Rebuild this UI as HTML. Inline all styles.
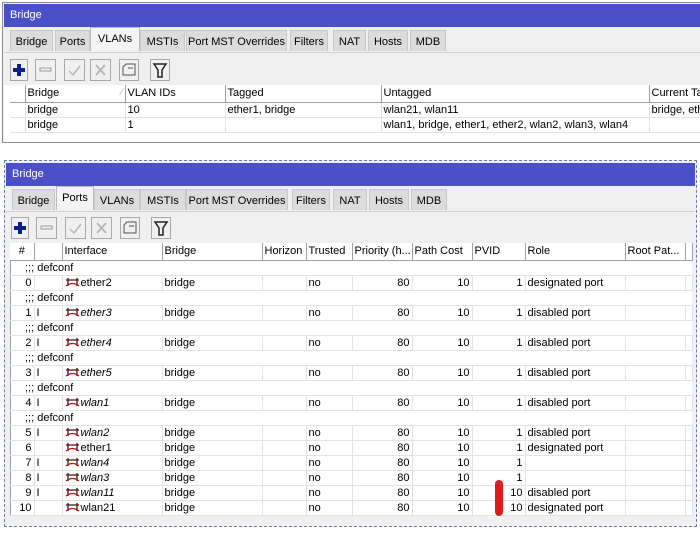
<!DOCTYPE html>
<html><head><meta charset="utf-8"><style>
*{margin:0;padding:0;box-sizing:border-box}
body{width:700px;height:538px;background:#fff;position:relative;overflow:hidden;font-family:"Liberation Sans",sans-serif;font-size:11px;color:#000}
.abs{position:absolute}
.title{background:#4b4fc9;color:#fff;font-size:11px;padding:5px 0 0 6px}
.tab{position:absolute;height:21px;background:#dcdcdc;border:1px solid #c8c8c8;border-bottom:none;padding:5px 0 0 0;text-align:center}
.tab.act{background:#f4f4f4;height:24px;top:-3px;padding-top:5px;border-color:#bdbdbd}
.btn{position:absolute;top:0;height:22px;border:1px solid #a9a9a9;background:#f0f0f0}
table{border-collapse:collapse;table-layout:fixed;position:absolute}
td{height:15px;padding:0 2px;white-space:nowrap;overflow:hidden;border-right:1px solid #e3e3e3;border-bottom:1px solid #e3e3e3;line-height:14px}
th{font-weight:normal;text-align:left;height:17px;padding:0 2px;border-right:1px solid #a0a0a0;border-bottom:1px solid #a0a0a0;background:#fff;white-space:nowrap;overflow:hidden}
.r{text-align:right}
.c{text-align:center}
i{font-style:italic}
.dc td{border-right:none;padding-left:15px}
.ic{display:inline-block;width:15px;height:10px;vertical-align:-1px;margin-right:1px}
</style></head><body>

<!-- top window -->
<div class="abs" style="left:2px;top:2px;width:698px;height:141px;border:1px solid #8a8a8a;border-right:none;background:#f0f0f0"></div>
<div class="abs title" style="left:4px;top:4px;width:696px;height:23px">Bridge</div>
<div class="abs" style="left:4px;top:30px;width:696px;height:23px;border-bottom:1px solid #d0d0d0">
 <div class="tab" style="left:6px;width:43px">Bridge</div>
 <div class="tab" style="left:51px;width:35px">Ports</div>
 <div class="tab act" style="left:86px;width:50px">VLANs</div>
 <div class="tab" style="left:136px;width:45px">MSTIs</div>
 <div class="tab" style="left:182px;width:101px">Port MST Overrides</div>
 <div class="tab" style="left:286px;width:38px">Filters</div>
 <div class="tab" style="left:329px;width:33px">NAT</div>
 <div class="tab" style="left:364px;width:40px">Hosts</div>
 <div class="tab" style="left:406px;width:36px">MDB</div>
</div>
<div class="abs" style="left:0;top:59px">
 <div class="btn" style="left:10px;width:18px"><svg width="16" height="20"><path d="M8 4v12M2 10h12" stroke="#0b1f8f" stroke-width="4"/></svg></div>
 <div class="btn" style="left:35px;width:21px"><svg width="19" height="20"><rect x="4" y="8" width="11" height="3" fill="none" stroke="#9a9a9a"/></svg></div>
 <div class="btn" style="left:64px;width:21px"><svg width="19" height="20"><path d="M4 11l4 4 7-9" fill="none" stroke="#b8b8b8" stroke-width="1.5"/></svg></div>
 <div class="btn" style="left:90px;width:21px"><svg width="19" height="20"><path d="M5 5l9 10M14 5l-9 10" stroke="#b8b8b8" stroke-width="2"/></svg></div>
 <div class="btn" style="left:119px;width:20px"><svg width="18" height="20"><path d="M3 15V7l3-3h9v11z" fill="none" stroke="#555"/><path d="M8 8h5" stroke="#555"/></svg></div>
 <div class="btn" style="left:150px;width:20px"><svg width="18" height="20"><path d="M3 4h12l-4 6v7h-4v-7z" fill="none" stroke="#222" stroke-width="1.5"/></svg></div>
</div>
<div class="abs" style="left:4px;top:85px;width:696px;height:57px;background:#fff"></div>
<table style="left:10px;top:85px;width:700px">
<colgroup><col style="width:15px"><col style="width:100px"><col style="width:100px"><col style="width:156px"><col style="width:268px"><col style="width:61px"></colgroup>
<tr><th></th><th>Bridge<span style="float:right;color:#aaa;font-size:9px">⁄</span></th><th>VLAN IDs</th><th>Tagged</th><th>Untagged</th><th>Current Tagged</th></tr>
<tr style="border-top:1px dotted #555"><td></td><td>bridge</td><td>10</td><td>ether1, bridge</td><td>wlan21, wlan11</td><td>bridge, ether1</td></tr>
<tr><td></td><td>bridge</td><td>1</td><td></td><td>wlan1, bridge, ether1, ether2, wlan2, wlan3, wlan4</td><td></td></tr>
</table>

<!-- bottom window -->
<div class="abs" style="left:4px;top:160px;width:693px;height:367px;border:1px dashed #6b7d9a;background:#f0f0f0"></div>
<div class="abs title" style="left:6px;top:163px;width:689px;height:23px">Bridge</div>
<div class="abs" style="left:6px;top:189px;width:689px;height:23px;border-bottom:1px solid #d0d0d0">
 <div class="tab" style="left:6px;width:43px">Bridge</div>
 <div class="tab act" style="left:50px;width:38px">Ports</div>
 <div class="tab" style="left:88px;width:46px">VLANs</div>
 <div class="tab" style="left:134px;width:46px">MSTIs</div>
 <div class="tab" style="left:180px;width:102px">Port MST Overrides</div>
 <div class="tab" style="left:286px;width:38px">Filters</div>
 <div class="tab" style="left:327px;width:34px">NAT</div>
 <div class="tab" style="left:363px;width:40px">Hosts</div>
 <div class="tab" style="left:405px;width:36px">MDB</div>
</div>
<div class="abs" style="left:0;top:217px">
 <div class="btn" style="left:11px;width:18px"><svg width="16" height="20"><path d="M8 4v12M2 10h12" stroke="#0b1f8f" stroke-width="4"/></svg></div>
 <div class="btn" style="left:36px;width:21px"><svg width="19" height="20"><rect x="4" y="8" width="11" height="3" fill="none" stroke="#9a9a9a"/></svg></div>
 <div class="btn" style="left:65px;width:21px"><svg width="19" height="20"><path d="M4 11l4 4 7-9" fill="none" stroke="#b8b8b8" stroke-width="1.5"/></svg></div>
 <div class="btn" style="left:91px;width:21px"><svg width="19" height="20"><path d="M5 5l9 10M14 5l-9 10" stroke="#b8b8b8" stroke-width="2"/></svg></div>
 <div class="btn" style="left:120px;width:20px"><svg width="18" height="20"><path d="M3 15V7l3-3h9v11z" fill="none" stroke="#555"/><path d="M8 8h5" stroke="#555"/></svg></div>
 <div class="btn" style="left:151px;width:20px"><svg width="18" height="20"><path d="M3 4h12l-4 6v7h-4v-7z" fill="none" stroke="#222" stroke-width="1.5"/></svg></div>
</div>
<div class="abs" style="left:10px;top:243px;width:682px;height:272px;background:#fff;border-left:1px solid #a0a0a0"></div>
<svg width="0" height="0" style="position:absolute"><defs><symbol id="br" viewBox="0 0 15 10"><path d="M3 1v8M12 1v8M1 3h13" stroke="#4a1010" stroke-width="1.3" fill="none"/><path d="M1 9q6.5-5 13 0" stroke="#b01818" stroke-width="1.3" fill="none"/></symbol></defs></svg>
<table style="left:10px;top:243px;width:682px">
<colgroup><col style="width:24px"><col style="width:28px"><col style="width:100px"><col style="width:100px"><col style="width:44px"><col style="width:46px"><col style="width:60px"><col style="width:60px"><col style="width:53px"><col style="width:100px"><col style="width:60px"><col style="width:7px"></colgroup>
<tr><th class="c">#</th><th></th><th>Interface</th><th>Bridge</th><th>Horizon</th><th>Trusted</th><th>Priority (h...</th><th>Path Cost</th><th>PVID</th><th>Role</th><th>Root Pat...</th><th></th></tr>
<tr class="dc"><td colspan="12">;;; defconf</td></tr>
<tr><td class="r">0</td><td></td><td><svg class="ic"><use href="#br"/></svg>ether2</td><td>bridge</td><td></td><td>no</td><td class="r">80</td><td class="r">10</td><td class="r">1</td><td>designated port</td><td></td><td></td></tr>
<tr class="dc"><td colspan="12">;;; defconf</td></tr>
<tr><td class="r">1</td><td>I</td><td><svg class="ic"><use href="#br"/></svg><i>ether3</i></td><td>bridge</td><td></td><td>no</td><td class="r">80</td><td class="r">10</td><td class="r">1</td><td>disabled port</td><td></td><td></td></tr>
<tr class="dc"><td colspan="12">;;; defconf</td></tr>
<tr><td class="r">2</td><td>I</td><td><svg class="ic"><use href="#br"/></svg><i>ether4</i></td><td>bridge</td><td></td><td>no</td><td class="r">80</td><td class="r">10</td><td class="r">1</td><td>disabled port</td><td></td><td></td></tr>
<tr class="dc"><td colspan="12">;;; defconf</td></tr>
<tr><td class="r">3</td><td>I</td><td><svg class="ic"><use href="#br"/></svg><i>ether5</i></td><td>bridge</td><td></td><td>no</td><td class="r">80</td><td class="r">10</td><td class="r">1</td><td>disabled port</td><td></td><td></td></tr>
<tr class="dc"><td colspan="12">;;; defconf</td></tr>
<tr><td class="r">4</td><td>I</td><td><svg class="ic"><use href="#br"/></svg><i>wlan1</i></td><td>bridge</td><td></td><td>no</td><td class="r">80</td><td class="r">10</td><td class="r">1</td><td>disabled port</td><td></td><td></td></tr>
<tr class="dc"><td colspan="12">;;; defconf</td></tr>
<tr><td class="r">5</td><td>I</td><td><svg class="ic"><use href="#br"/></svg><i>wlan2</i></td><td>bridge</td><td></td><td>no</td><td class="r">80</td><td class="r">10</td><td class="r">1</td><td>disabled port</td><td></td><td></td></tr>
<tr><td class="r">6</td><td></td><td><svg class="ic"><use href="#br"/></svg>ether1</td><td>bridge</td><td></td><td>no</td><td class="r">80</td><td class="r">10</td><td class="r">1</td><td>designated port</td><td></td><td></td></tr>
<tr><td class="r">7</td><td>I</td><td><svg class="ic"><use href="#br"/></svg><i>wlan4</i></td><td>bridge</td><td></td><td>no</td><td class="r">80</td><td class="r">10</td><td class="r">1</td><td></td><td></td><td></td></tr>
<tr><td class="r">8</td><td>I</td><td><svg class="ic"><use href="#br"/></svg><i>wlan3</i></td><td>bridge</td><td></td><td>no</td><td class="r">80</td><td class="r">10</td><td class="r">1</td><td></td><td></td><td></td></tr>
<tr><td class="r">9</td><td>I</td><td><svg class="ic"><use href="#br"/></svg><i>wlan11</i></td><td>bridge</td><td></td><td>no</td><td class="r">80</td><td class="r">10</td><td class="r">10</td><td>disabled port</td><td></td><td></td></tr>
<tr><td class="r">10</td><td></td><td><svg class="ic"><use href="#br"/></svg>wlan21</td><td>bridge</td><td></td><td>no</td><td class="r">80</td><td class="r">10</td><td class="r">10</td><td>designated port</td><td></td><td></td></tr>
</table>
<div class="abs" style="left:495px;top:480px;width:8px;height:36px;border-radius:4px;background:#e01b1b"></div>
</body></html>
